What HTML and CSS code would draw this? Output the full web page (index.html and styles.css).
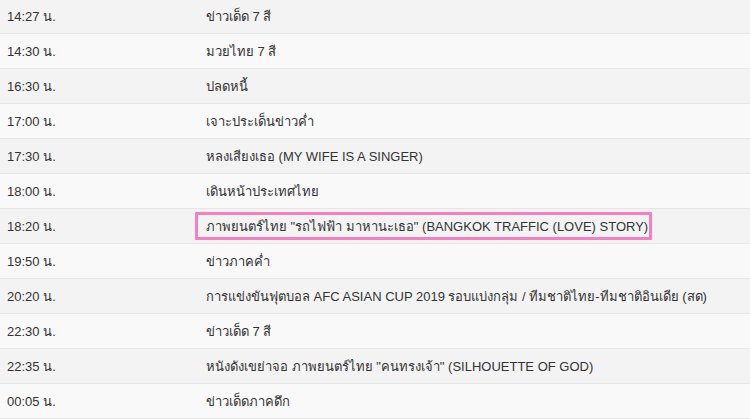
FILE: index.html
```html
<!DOCTYPE html>
<html lang="th">
  <head>
    <meta charset="UTF-8" />
    <meta name="viewport" content="width=device-width, initial-scale=1.0" />
    <title>ผังรายการ</title>
    <link rel="stylesheet" href="styles.css">
  </head>
  <body>
    <table class="schedule">
      <colgroup>
        <col class="col-time" />
        <col class="col-title" />
      </colgroup>
      <tbody>
        <tr><td>14:27 น.</td><td>ข่าวเด็ด 7 สี</td></tr>
        <tr><td>14:30 น.</td><td>มวยไทย 7 สี</td></tr>
        <tr><td>16:30 น.</td><td>ปลดหนี้</td></tr>
        <tr><td>17:00 น.</td><td>เจาะประเด็นข่าวค่ำ</td></tr>
        <tr><td>17:30 น.</td><td>หลงเสียงเธอ (MY WIFE IS A SINGER)</td></tr>
        <tr><td>18:00 น.</td><td>เดินหน้าประเทศไทย</td></tr>
        <tr>
          <td>18:20 น.</td>
          <td><span class="highlight">ภาพยนตร์ไทย "รถไฟฟ้า มาหานะเธอ" (BANGKOK TRAFFIC (LOVE) STORY)</span></td>
        </tr>
        <tr><td>19:50 น.</td><td>ข่าวภาคค่ำ</td></tr>
        <tr><td>20:20 น.</td><td>การแข่งขันฟุตบอล AFC ASIAN CUP 2019 รอบแบ่งกลุ่ม / ทีมชาติไทย-ทีมชาติอินเดีย (สด)</td></tr>
        <tr><td>22:30 น.</td><td>ข่าวเด็ด 7 สี</td></tr>
        <tr><td>22:35 น.</td><td>หนังดังเขย่าจอ ภาพยนตร์ไทย "คนทรงเจ้า" (SILHOUETTE OF GOD)</td></tr>
        <tr><td>00:05 น.</td><td>ข่าวเด็ดภาคดึก</td></tr>
      </tbody>
    </table>
  </body>
</html>
```

FILE: styles.css
```css
html,
body {
  margin: 0;
  padding: 0;
}

body {
  background: #ffffff;
  font-family: "Liberation Sans", "Noto Sans", sans-serif;
  font-size: 13px;
  color: #333333;
}

.schedule {
  width: 100%;
  border-collapse: collapse;
  table-layout: fixed;
  margin-top: -1px;
}

.col-time {
  width: 199px;
}

.schedule td {
  height: 34px;
  padding: 0 7px;
  border-bottom: 1px solid #e6e6e6;
  vertical-align: middle;
  white-space: nowrap;
}

.schedule tr:nth-child(odd) td {
  background-color: #f3f3f3;
}

.schedule tr:nth-child(even) td {
  background-color: #f9f9f9;
}

/* pink marker drawn over the highlighted show */
.highlight {
  position: relative;
}

.highlight::after {
  content: "";
  position: absolute;
  left: -11px;
  right: -4px;
  top: -7px;
  bottom: -6px;
  border: 3px solid #f77fbf;
  border-radius: 1px;
}
```
